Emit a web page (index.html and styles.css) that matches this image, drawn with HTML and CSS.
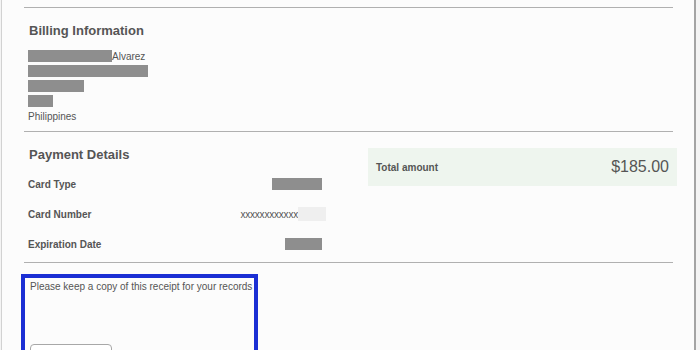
FILE: index.html
```html
<!DOCTYPE html>
<html lang="en">

<head>
    <meta charset="UTF-8">
    <meta name="viewport" content="width=device-width, initial-scale=1.0">
    <title>Receipt</title>
    <link rel="stylesheet" href="styles.css">
</head>

<body>
    <div class="page">
        <div class="receipt">
            <div class="section billing">
                <h2 class="title">Billing Information</h2>
                <div class="line"><span class="mask" style="width: 84px"></span>Alvarez</div>
                <div class="line"><span class="mask" style="width: 120px"></span></div>
                <div class="line"><span class="mask" style="width: 56px"></span></div>
                <div class="line"><span class="mask" style="width: 25px"></span></div>
                <div class="line">Philippines</div>
            </div>

            <div class="section payment">
                <div class="details">
                    <h2 class="title">Payment Details</h2>
                    <div class="row">
                        <span class="label">Card Type</span>
                        <span class="mask" style="width: 50px"></span>
                    </div>
                    <div class="row">
                        <span class="label">Card Number</span>
                        <span class="number">xxxxxxxxxxxx<span class="mask light" style="width: 28px"></span></span>
                    </div>
                    <div class="row">
                        <span class="label">Expiration Date</span>
                        <span class="mask" style="width: 37px"></span>
                    </div>
                </div>
                <div class="total">
                    <span class="label">Total amount</span>
                    <span class="amount">$185.00</span>
                </div>
            </div>

            <div class="section footer">
                <div class="note">
                    <p>Please keep a copy of this receipt for your records</p>
                    <button class="btn small"></button>
                </div>
                <button class="btn wide"></button>
            </div>
        </div>
    </div>
</body>

</html>
```

FILE: styles.css
```css
html {
    height: 100%;
}

body {
    margin: 0;
    height: 100%;
    background-color: #f4f4f4;
    font-family: "Liberation Sans", Arial, sans-serif;
    color: #555;
    overflow: hidden;
}

.page {
    margin-left: 1px;
    width: 692px;
    height: 350px;
    overflow: hidden;
    background-color: #fcfcfc;
    border-left: 1px solid #d2d2d2;
    border-right: 2px solid #a4a4a4;
}

.receipt {
    margin-left: 22px;
    width: 649px;
    padding-top: 7px;
}

.section {
    border-top: 1px solid #b0b0b0;
    padding-left: 4px;
}

.title {
    margin: 0;
    font-size: 13px;
    line-height: 16px;
    font-weight: bold;
    color: #555;
    padding-left: 1px;
}

.mask {
    display: inline-block;
    height: 12px;
    vertical-align: middle;
    background-color: #8e8e8e;
}

.mask.light {
    height: 14px;
    background-color: #efefef;
}

/* billing */
.billing {
    padding-top: 15px;
    padding-bottom: 7px;
}

.billing .title {
    margin-bottom: 10px;
}

.line {
    font-size: 10px;
    line-height: 15px;
    height: 15px;
}

.line .mask {
    margin-top: -2px;
}

/* payment */
.payment {
    display: flex;
    align-items: flex-start;
    padding-top: 15px;
    padding-bottom: 3px;
}

.details {
    width: 298px;
}

.details .title {
    margin-bottom: 6px;
}

.row {
    display: flex;
    align-items: center;
    justify-content: space-between;
    height: 30px;
    padding-right: 4px;
}

.row .label,
.total .label {
    font-size: 10px;
    font-weight: bold;
}

.number {
    display: flex;
    align-items: center;
    font-size: 10px;
    margin-right: -4px;
    letter-spacing: -0.2px;
}

.total {
    margin-left: 42px;
    margin-top: 1px;
    margin-right: -4px;
    width: 293px;
    height: 38px;
    background-color: #eef5ee;
    display: flex;
    align-items: center;
    justify-content: space-between;
    padding: 0 8px;
}

.amount {
    font-size: 16px;
    color: #555;
}

/* footer */
.footer {
    display: flex;
    justify-content: space-between;
    align-items: flex-start;
    padding-top: 11px;
    padding-left: 0;
}

.note {
    margin-left: -3px;
    width: 224px;
    height: 90px;
    border: 4px solid #1b2fd4;
    padding-left: 5px;
}

.note p {
    margin: 2px 0 0;
    font-size: 10px;
    line-height: 14px;
}

.btn {
    display: block;
    height: 24px;
    background-color: #fff;
    border: 1px solid #a8a8a8;
    border-radius: 4px;
}

.btn.small {
    width: 82px;
    margin-top: 50px;
}

.btn.wide {
    width: 135px;
    margin-top: 81px;
    margin-right: 3px;
}
```
